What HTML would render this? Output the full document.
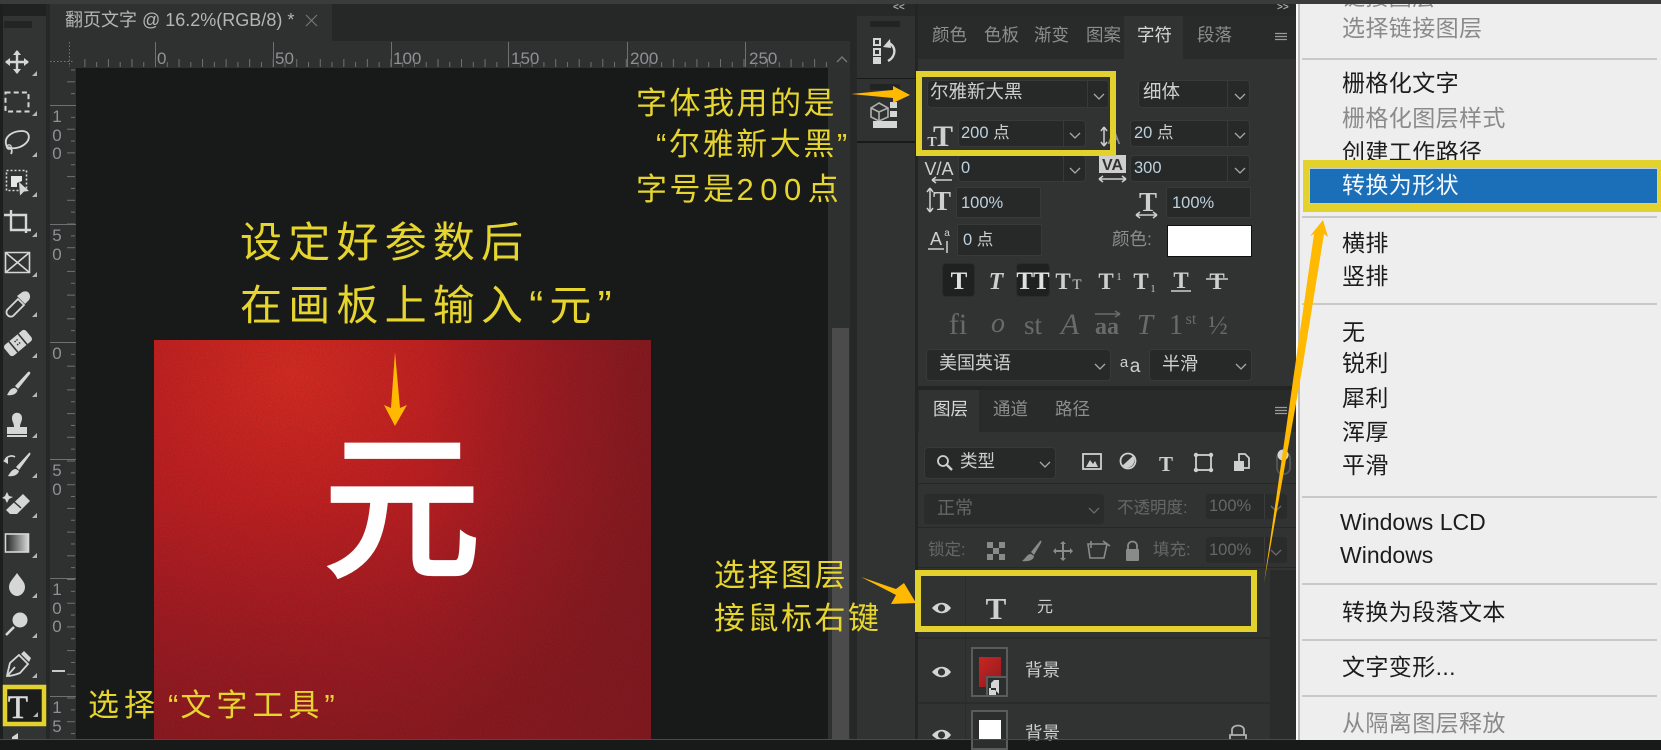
<!DOCTYPE html>
<html lang="zh"><head><meta charset="utf-8"><title>翻页文字</title>
<style>
*{box-sizing:border-box;margin:0;padding:0}
html,body{width:1661px;height:740px;overflow:hidden;background:#181a1a;font-family:"Liberation Sans","Noto Sans CJK SC",sans-serif}
.b{position:absolute}
.t{position:absolute;white-space:nowrap;line-height:1}
.y{position:absolute;white-space:nowrap;line-height:1;color:#e6d52f;font-family:"Liberation Sans","Noto Sans CJK SC",sans-serif;font-weight:400;z-index:5}
.f{position:absolute;background:#272929;border:1px solid #383a3a;border-radius:4px}
.p{color:#cfcfcf}.n{color:#bcd0de}.g{color:#8d8d8d}.d{color:#666}
.m{position:absolute;left:1342px;font-size:23px;line-height:1;white-space:nowrap;color:#1c1c1c;letter-spacing:.4px}
.md{color:#8a8a8a}
.s{position:absolute;left:1302px;width:355px;height:2px;background:#c9c9c9}
</style></head><body>

<!-- frame -->
<div class="b" style="left:0;top:0;width:1661px;height:4px;background:#3b3b3b"></div>
<div class="b" style="left:0;top:4px;width:3px;height:736px;background:#1d1e1e"></div>
<div class="b" style="left:3px;top:4px;width:43px;height:736px;background:#323433"></div>
<div class="b" style="left:3px;top:4px;width:43px;height:12px;background:#202121"></div>
<div class="b" style="left:46px;top:4px;width:4px;height:736px;background:#262727"></div>

<!-- document tabs -->
<div class="b" style="left:50px;top:4px;width:778px;height:37px;background:#262727"></div>
<div class="b" style="left:50px;top:4px;width:282px;height:37px;background:#2f3030"></div>
<div class="t" style="left:65px;top:11px;font-size:18px;color:#b5b5b5">翻页文字 @ 16.2%(RGB/8) *</div>

<!-- rulers -->
<div class="b" style="left:50px;top:41px;width:800px;height:27px;background:#2f3030"></div>
<div class="b" style="left:50px;top:41px;width:26px;height:699px;background:#2f3030"></div>
<div class="b" style="left:76px;top:68px;width:752px;height:672px;background:#181a1a"></div>
<div class="t g" style="left:157px;top:50px;font-size:17px;color:#8d9296">0</div>
<div class="t g" style="left:275px;top:50px;font-size:17px;color:#8d9296">50</div>
<div class="t g" style="left:393px;top:50px;font-size:17px;color:#8d9296">100</div>
<div class="t g" style="left:511px;top:50px;font-size:17px;color:#8d9296">150</div>
<div class="t g" style="left:630px;top:50px;font-size:17px;color:#8d9296">200</div>
<div class="t g" style="left:749px;top:50px;font-size:17px;color:#8d9296">250</div>
<div class="t" style="left:51px;top:108px;width:12px;font-size:17px;line-height:18.5px;white-space:normal;text-align:center;color:#8d9296">1<br>0<br>0</div>
<div class="t" style="left:51px;top:227px;width:12px;font-size:17px;line-height:18.5px;white-space:normal;text-align:center;color:#8d9296">5<br>0</div>
<div class="t" style="left:51px;top:345px;width:12px;font-size:17px;line-height:18.5px;white-space:normal;text-align:center;color:#8d9296">0</div>
<div class="t" style="left:51px;top:462px;width:12px;font-size:17px;line-height:18.5px;white-space:normal;text-align:center;color:#8d9296">5<br>0</div>
<div class="t" style="left:51px;top:581px;width:12px;font-size:17px;line-height:18.5px;white-space:normal;text-align:center;color:#8d9296">1<br>0<br>0</div>
<div class="t" style="left:51px;top:699px;width:12px;font-size:17px;line-height:18.5px;white-space:normal;text-align:center;color:#8d9296">1<br>5</div>

<!-- canvas -->
<div class="b" style="left:154px;top:340px;width:497px;height:400px;background:radial-gradient(ellipse 430px 380px at 28% 8%,#d42c22 0,#c02122 35%,#ab1d24 68%,rgba(150,27,34,.95) 100%),#8f1b22"></div>
<svg class="b" style="left:154px;top:340px" width="497" height="400"><defs>
<linearGradient id="rd" x1="0" x2="1" y1="0" y2="0"><stop offset=".55" stop-color="#7a1a20" stop-opacity="0"/><stop offset="1" stop-color="#7a1a20" stop-opacity=".7"/></linearGradient>
<linearGradient id="rb" x1="0" x2="0" y1="0" y2="1"><stop offset=".4" stop-color="#7f1a20" stop-opacity="0"/><stop offset="1" stop-color="#7f1a20" stop-opacity=".45"/></linearGradient>
<filter id="nz"><feTurbulence type="fractalNoise" baseFrequency=".8" numOctaves="2" seed="4"/><feColorMatrix values="0 0 0 0 0 0 0 0 0 0 0 0 0 0 0 0 0 0 .9 -.25"/></filter></defs>
<rect width="497" height="400" fill="url(#rd)"/><rect width="497" height="400" fill="url(#rb)"/>
<rect width="497" height="400" filter="url(#nz)" opacity=".22"/></svg>
<div class="t" style="left:324px;top:418px;font-size:156px;font-weight:400;color:#fff;-webkit-text-stroke:5px #fff;font-family:'Noto Sans CJK SC',sans-serif">元</div>

<!-- scrollbar & gap -->
<div class="b" style="left:828px;top:68px;width:22px;height:672px;background:#2e2f2f"></div>
<div class="b" style="left:832px;top:328px;width:17px;height:412px;background:#4b4b4b"></div>
<div class="b" style="left:850px;top:4px;width:7px;height:736px;background:#262727"></div>
<div class="b" style="left:828px;top:4px;width:29px;height:37px;background:#262727"></div>

<!-- dock -->
<div class="b" style="left:857px;top:4px;width:439px;height:12px;background:#272828"></div>
<div class="b" style="left:857px;top:16px;width:58px;height:62px;background:#303232"></div>
<div class="b" style="left:857px;top:79px;width:58px;height:62px;background:#303232"></div>
<div class="b" style="left:857px;top:143px;width:58px;height:597px;background:#313333"></div>
<div class="b" style="left:915px;top:4px;width:3px;height:736px;background:#232424"></div>

<!-- right panel -->
<div class="b" style="left:918px;top:16px;width:378px;height:43px;background:#292a2a"></div>
<div class="b" style="left:1124px;top:16px;width:59px;height:43px;background:#313333"></div>
<div class="b" style="left:918px;top:59px;width:378px;height:327px;background:#313333"></div>
<div class="b" style="left:918px;top:386px;width:378px;height:4px;background:#232424"></div>
<div class="b" style="left:918px;top:390px;width:378px;height:42px;background:#292a2a"></div>
<div class="b" style="left:919px;top:390px;width:60px;height:42px;background:#313333"></div>
<div class="b" style="left:918px;top:432px;width:378px;height:308px;background:#313333"></div>
<div class="b" style="left:1270px;top:570px;width:26px;height:170px;background:#2a2c2c"></div>
<div class="b" style="left:918px;top:483px;width:378px;height:1px;background:#262828"></div>
<div class="b" style="left:918px;top:527px;width:378px;height:1px;background:#262828"></div>
<div class="b" style="left:918px;top:567px;width:378px;height:1px;background:#262828"></div>
<div class="b" style="left:918px;top:637px;width:352px;height:2px;background:#2a2c2c"></div>
<div class="b" style="left:918px;top:702px;width:352px;height:2px;background:#2a2c2c"></div>
<div class="b" style="left:965px;top:576px;width:1px;height:164px;background:#2a2c2c"></div>

<!-- tabs -->
<div class="t g" style="left:932px;top:27px;font-size:17.5px">颜色</div>
<div class="t g" style="left:984px;top:27px;font-size:17.5px">色板</div>
<div class="t g" style="left:1034px;top:27px;font-size:17.5px">渐变</div>
<div class="t g" style="left:1086px;top:27px;font-size:17.5px">图案</div>
<div class="t" style="left:1137px;top:27px;font-size:17.5px;color:#d8d8d8">字符</div>
<div class="t g" style="left:1197px;top:27px;font-size:17.5px">段落</div>

<!-- character panel fields -->
<div class="f" style="left:927px;top:80px;width:182px;height:28px"></div>
<div class="f" style="left:1138px;top:80px;width:112px;height:28px"></div>
<div class="f" style="left:958px;top:120px;width:128px;height:27px"></div>
<div class="f" style="left:1130px;top:120px;width:120px;height:27px"></div>
<div class="f" style="left:958px;top:155px;width:128px;height:27px"></div>
<div class="f" style="left:1130px;top:155px;width:120px;height:27px"></div>
<div class="f" style="left:956px;top:187px;width:85px;height:31px;border-radius:1px"></div>
<div class="f" style="left:1166px;top:187px;width:85px;height:31px;border-radius:1px"></div>
<div class="f" style="left:957px;top:224px;width:85px;height:32px;border-radius:1px"></div>
<div class="b" style="left:1167px;top:225px;width:85px;height:32px;background:#fff;border:1px solid #111"></div>
<div class="f" style="left:942px;top:263px;width:33px;height:34px;background:#1f2121;border-color:#2b2d2d"></div>
<div class="f" style="left:1016px;top:263px;width:34px;height:34px;background:#1f2121;border-color:#2b2d2d"></div>
<div class="f" style="left:926px;top:349px;width:185px;height:32px"></div>
<div class="f" style="left:1149px;top:349px;width:103px;height:32px"></div>
<div class="b" style="left:1087px;top:81px;width:1px;height:26px;background:#383a3a"></div>
<div class="b" style="left:1227px;top:81px;width:1px;height:26px;background:#383a3a"></div>
<div class="b" style="left:1063px;top:121px;width:1px;height:25px;background:#383a3a"></div>
<div class="b" style="left:1227px;top:121px;width:1px;height:25px;background:#383a3a"></div>
<div class="b" style="left:1063px;top:156px;width:1px;height:25px;background:#383a3a"></div>
<div class="b" style="left:1227px;top:156px;width:1px;height:25px;background:#383a3a"></div>

<div class="t p" style="left:930px;top:83px;font-size:18.5px">尔雅新大黑</div>
<div class="t p" style="left:1143px;top:83px;font-size:18.5px">细体</div>
<div class="t n" style="left:961px;top:125px;font-size:16.5px">200 <span class="p">点</span></div>
<div class="t n" style="left:1134px;top:125px;font-size:16.5px">20 <span class="p">点</span></div>
<div class="t n" style="left:961px;top:160px;font-size:16.5px">0</div>
<div class="t n" style="left:1134px;top:160px;font-size:16.5px">300</div>
<div class="t n" style="left:961px;top:195px;font-size:16.5px">100%</div>
<div class="t n" style="left:1172px;top:195px;font-size:16.5px">100%</div>
<div class="t n" style="left:963px;top:232px;font-size:16.5px">0 <span class="p">点</span></div>
<div class="t g" style="left:1112px;top:231px;font-size:17.5px">颜色:</div>
<div class="t p" style="left:939px;top:354px;font-size:18px">美国英语</div>
<div class="t p" style="left:1162px;top:355px;font-size:18px">半滑</div>

<!-- layers panel -->
<div class="t" style="left:933px;top:401px;font-size:17.5px;color:#d8d8d8">图层</div>
<div class="t g" style="left:993px;top:401px;font-size:17.5px">通道</div>
<div class="t g" style="left:1055px;top:401px;font-size:17.5px">路径</div>
<div class="f" style="left:924px;top:447px;width:132px;height:32px"></div>
<div class="t p" style="left:960px;top:453px;font-size:17.5px">类型</div>
<div class="b" style="left:924px;top:494px;width:180px;height:30px;background:#2a2c2c;border-radius:3px"></div>
<div class="t d" style="left:937px;top:499px;font-size:18px">正常</div>
<div class="t d" style="left:1117px;top:500px;font-size:16.5px">不透明度:</div>
<div class="b" style="left:1206px;top:494px;width:81px;height:25px;background:#2a2c2c;border-radius:3px"></div>
<div class="t d" style="left:1209px;top:498px;font-size:16.5px">100%</div>
<div class="b" style="left:1264px;top:494px;width:1px;height:25px;background:#3a3c3c"></div>
<div class="t d" style="left:928px;top:542px;font-size:16.5px">锁定:</div>
<div class="t d" style="left:1153px;top:542px;font-size:16.5px">填充:</div>
<div class="b" style="left:1206px;top:537px;width:81px;height:26px;background:#2a2c2c;border-radius:3px"></div>
<div class="t d" style="left:1209px;top:542px;font-size:16.5px">100%</div>
<div class="b" style="left:1264px;top:537px;width:1px;height:26px;background:#3a3c3c"></div>
<div class="t p" style="left:1037px;top:600px;font-size:16px">元</div>

<!-- layer thumbs -->
<div class="b" style="left:971px;top:647px;width:37px;height:50px;border:2px solid #5a5c5c;background:#2c2e2e"></div>
<div class="b" style="left:979px;top:657px;width:22px;height:30px;background:linear-gradient(135deg,#c92620,#8f1a22)"></div>
<div class="b" style="left:986px;top:676px;width:22px;height:21px;background:#2c2e2e;border:2px solid #5a5c5c"></div>
<div class="t p" style="left:1025px;top:662px;font-size:17.5px">背景</div>
<div class="b" style="left:971px;top:710px;width:37px;height:40px;border:2px solid #5a5c5c;background:#2c2e2e"></div>
<div class="b" style="left:979px;top:720px;width:22px;height:20px;background:#fff"></div>
<div class="t p" style="left:1025px;top:725px;font-size:17.5px">背景</div>

<!-- context menu -->
<div class="b" style="left:1296px;top:4px;width:365px;height:736px;background:#eeeeee;border-left:2px solid #fafafa"></div>
<div class="b" style="left:1298px;top:4px;width:2px;height:736px;background:#bdbdbd"></div>
<div class="m md" style="top:-14px">链接图层</div>
<div class="b" style="left:1296px;top:0;width:365px;height:4px;background:#3b3b3b;z-index:3"></div>
<div class="m md" style="top:17px">选择链接图层</div>
<div class="s" style="top:58px"></div>
<div class="m" style="top:72px">栅格化文字</div>
<div class="m md" style="top:107px">栅格化图层样式</div>
<div class="m" style="top:141px">创建工作路径</div>
<div class="b" style="left:1303px;top:160px;width:358px;height:52px;background:#e3d22e"></div>
<div class="b" style="left:1309px;top:168px;width:349px;height:36px;background:#1a6fb8;border:1px solid #b8cfe6"></div>
<div class="m" style="top:174px;color:#f4f8fc">转换为形状</div>
<div class="s" style="top:216px"></div>
<div class="m" style="top:232px">横排</div>
<div class="m" style="top:265px">竖排</div>
<div class="s" style="top:303px"></div>
<div class="m" style="top:321px">无</div>
<div class="m" style="top:352px">锐利</div>
<div class="m" style="top:387px">犀利</div>
<div class="m" style="top:421px">浑厚</div>
<div class="m" style="top:454px">平滑</div>
<div class="s" style="top:496px"></div>
<div class="m" style="top:511px;left:1340px;letter-spacing:0">Windows LCD</div>
<div class="m" style="top:544px;left:1340px;letter-spacing:0">Windows</div>
<div class="s" style="top:583px"></div>
<div class="m" style="top:601px">转换为段落文本</div>
<div class="s" style="top:639px"></div>
<div class="m" style="top:656px">文字变形...</div>
<div class="s" style="top:695px"></div>
<div class="m md" style="top:712px">从隔离图层释放</div>

<!-- icon layer -->
<svg class="b" style="left:0;top:0;z-index:4" width="1661" height="740" viewBox="0 0 1661 740">
<defs>
<path id="cv" d="M-5-2L0 3L5-2" fill="none" stroke="#a8a8a8" stroke-width="1.3"/>
<path id="tri" d="M5 0V5H0Z" fill="#b5b5b5"/>
<pattern id="tk" x="155" y="41" width="23.54" height="26" patternUnits="userSpaceOnUse"><rect x="0" y="18" width="1" height="8" fill="#6f7171"/><rect x="11.77" y="21" width="1" height="5" fill="#6f7171"/></pattern>
<pattern id="vk" x="50" y="105" width="26" height="23.7" patternUnits="userSpaceOnUse"><rect x="17" y="0" width="8" height="1" fill="#6f7171"/><rect x="21" y="11.85" width="4" height="1" fill="#6f7171"/></pattern>
</defs>

<!-- ruler ticks -->
<rect x="76" y="41" width="752" height="26" fill="url(#tk)"/>
<g fill="#6f7171"><rect x="155" y="42" width="1" height="25"/><rect x="273" y="42" width="1" height="25"/><rect x="391" y="42" width="1" height="25"/><rect x="508" y="42" width="1" height="25"/><rect x="627" y="42" width="1" height="25"/><rect x="745" y="42" width="1" height="25"/>
<rect x="50" y="105" width="26" height="1"/><rect x="50" y="224" width="26" height="1"/><rect x="50" y="342" width="26" height="1"/><rect x="50" y="459" width="26" height="1"/><rect x="50" y="578" width="26" height="1"/><rect x="50" y="696" width="26" height="1"/></g>
<rect x="50" y="68" width="26" height="672" fill="url(#vk)"/>
<rect x="52" y="670" width="13" height="2" fill="#c9c9c9"/>
<path d="M69.5 42V67M50 61.5H74" stroke="#777" stroke-dasharray="1.5 2" fill="none"/>
<path d="M306 15L317 26M317 15L306 26" stroke="#777" stroke-width="1.2"/>
<path d="M837 62l5-5 5 5" stroke="#777" stroke-width="1.4" fill="none"/>
<text x="893" y="10" font-size="10" fill="#aaa" font-weight="700" font-family="Liberation Sans">&lt;&lt;</text>
<text x="1277" y="10" font-size="10" fill="#aaa" font-weight="700" font-family="Liberation Sans">&gt;&gt;</text>

<!-- toolbar -->
<rect x="4" y="21" width="28" height="7" fill="#1f2020" opacity=".75"/>
<g fill="#b5b5b5">
<use href="#tri" x="32" y="71"/><use href="#tri" x="32" y="111"/><use href="#tri" x="32" y="152"/><use href="#tri" x="32" y="192"/><use href="#tri" x="32" y="232"/><use href="#tri" x="32" y="272"/><use href="#tri" x="32" y="312"/><use href="#tri" x="32" y="353"/><use href="#tri" x="32" y="392"/><use href="#tri" x="32" y="433"/><use href="#tri" x="32" y="473"/><use href="#tri" x="32" y="513"/><use href="#tri" x="32" y="553"/><use href="#tri" x="32" y="593"/><use href="#tri" x="32" y="633"/><use href="#tri" x="32" y="673"/>
</g>
<g stroke="#d6d6d6" fill="none" stroke-width="2">
<!-- move -->
<path d="M6 62H28M17 51V73" stroke-width="2.4"/><path d="M17 50l-4 5h8zM17 74l-4-5h8zM5 62l5-4v8zM29 62l-5-4v8z" fill="#d6d6d6" stroke="none"/>
<!-- marquee -->
<rect x="5.5" y="92.5" width="23" height="19" stroke-dasharray="5 3.2"/>
<!-- lasso -->
<path d="M7 147C2 136 14 131 22 131C30 131 31 139 25 144C19 149 11 149 7 147ZM8 147c3 1 5 3 3 7" stroke-width="1.8"/><circle cx="9" cy="147" r="2.2" stroke-width="1.4"/>
<!-- object select -->
<rect x="6.5" y="170.5" width="20" height="20" stroke-dasharray="2 2" stroke-width="1.6"/>
<path d="M11 176h11v5l-5 2v4h-6z" fill="#e6e6e6" stroke="none"/><path d="M19 182l10 9-5 .5-4 4z" fill="#d6d6d6" stroke="none"/>
<!-- crop -->
<path d="M4 215H26V233M11 210V230H31" stroke-width="2.4"/>
<!-- frame -->
<path d="M5.5 252.5H29.5V272.5H5.5ZM5.5 252.5L29.5 272.5M29.5 252.5L5.5 272.5" stroke-width="1.6"/>
<!-- eyedropper -->
<path d="M7 310L18 299L24 305L13 316C10 318 5 315 7 310Z" stroke-width="1.8"/><path d="M17 296L25 304L29 300C31 297 30 294 28 292C26 291 23 291 21 293Z" fill="#d6d6d6" stroke="none"/>
<!-- healing -->
<g transform="rotate(-40 18 343)"><rect x="4" y="336" width="28" height="14" rx="3" fill="#d6d6d6" stroke="none"/><path d="M12 336V350M24 336V350" stroke="#323433" stroke-width="1.6"/><path d="M16 340h4M16 344h4" stroke="#323433" stroke-width="1.4" stroke-dasharray="1.5 1"/></g>
<!-- brush -->
<path d="M28 372L15 386L18 389L30 374C31 372 29 371 28 372Z" fill="#d6d6d6" stroke="none"/><path d="M15 388C10 388 9 392 7 395C12 396 17 394 17.500 390Z" fill="#d6d6d6" stroke="none"/>
<!-- stamp -->
<path d="M12 418C12 411 22 411 22 418C22 422 20 423 20 427H14C14 423 12 422 12 418ZM7 427H27V434H7Z" fill="#d6d6d6" stroke="none"/><rect x="7" y="435" width="20" height="2" fill="#d6d6d6" stroke="none"/>
<!-- history brush -->
<path d="M29 453L16 467L19 470L30 455C31 453 30 452 29 453Z" fill="#d6d6d6" stroke="none"/><path d="M16 469C12 469 10 473 8 476C13 477 18 475 19 471Z" fill="#d6d6d6" stroke="none"/><path d="M5 460C7 456 12 455 15 457" stroke-width="1.6"/><path d="M3 461l5 3 0-6z" fill="#d6d6d6" stroke="none"/>
<!-- eraser -->
<path d="M23 494L30 501L17 514H10L6 510Z" fill="#d6d6d6" stroke="none"/><path d="M12 500l9 8" stroke="#323433" stroke-width="1.5"/><path d="M5 496l2-4 2 4 4 1-4 2-2 4-2-4-3-1z" fill="#d6d6d6" stroke="none"/>
<!-- gradient -->
<defs><linearGradient id="gr"><stop offset="0" stop-color="#222"/><stop offset="1" stop-color="#d8d8d8"/></linearGradient></defs>
<rect x="5.500" y="534" width="23" height="18" fill="url(#gr)" stroke="#d6d6d6" stroke-width="1.6"/>
<!-- drop -->
<path d="M17 573C21 579 25 582 25 587C25 592 21 596 17 596C13 596 9 592 9 587C9 582 13 579 17 573Z" fill="#d6d6d6" stroke="none"/>
<!-- dodge -->
<circle cx="20" cy="620" r="7.500" fill="#d6d6d6" stroke="none"/><path d="M14 627L6 635" stroke-width="2.6"/>
<!-- pen -->
<path d="M19 655L28 664L20 673C15 675 10 676 7 676C8 671 9 667 10 663ZM8 675L15 667" stroke-width="1.8"/><path d="M21 654L24 651L31 658L29 662Z" fill="#d6d6d6" stroke="none"/>
<!-- tool selection box -->
<rect x="5" y="687" width="39" height="37" fill="#1b1d1d" stroke="#e3d22e" stroke-width="4.500"/>
<path d="M12 737L18 733V740H12Z" fill="#d6d6d6" stroke="none"/>
</g>
<use href="#tri" x="33" y="712"/>
<text x="18" y="718" font-family="Liberation Serif" font-size="33" fill="#dadada" stroke="#dadada" stroke-width=".5" text-anchor="middle">T</text>

<!-- dock icons -->
<rect x="870" y="21" width="30" height="6" fill="#1f2020" opacity=".8"/>
<rect x="870" y="84" width="30" height="6" fill="#1f2020" opacity=".8"/>
<g stroke="#d6d6d6" fill="none" stroke-width="2">
<rect x="874" y="39" width="6" height="6"/><rect x="874" y="49" width="6" height="6"/><rect x="873" y="57" width="8" height="7" fill="#d6d6d6" stroke="none"/>
<path d="M888 43C896 45 897 56 888 61" stroke-width="2.4"/><path d="M883 47L890 39L891 48Z" fill="#d6d6d6" stroke="none"/>
<path d="M879 103L888 108V117L879 121L871 117V108ZM871 108L879 112L888 108M879 112V121" stroke="#b0b0b0" stroke-width="1.6"/>
<rect x="890" y="102" width="7" height="6" fill="#d6d6d6" stroke="none"/><rect x="890" y="111" width="7" height="6" fill="#d6d6d6" stroke="none"/><rect x="873" y="121" width="24" height="7" fill="#d6d6d6" stroke="none"/>
</g>

<!-- hamburgers -->
<path d="M1275 33.500H1287M1275 36.500H1287M1275 39.500H1287M1275 407.500H1287M1275 410.500H1287M1275 413.500H1287" stroke="#9a9a9a" stroke-width="1.300"/>

<!-- chevrons -->
<use href="#cv" x="1099" y="96"/><use href="#cv" x="1240" y="96"/><use href="#cv" x="1075" y="135"/><use href="#cv" x="1240" y="135"/><use href="#cv" x="1075" y="170"/><use href="#cv" x="1240" y="170"/><use href="#cv" x="1100" y="366"/><use href="#cv" x="1241" y="366"/><use href="#cv" x="1045" y="464"/>
<g opacity=".5"><use href="#cv" x="1094" y="510"/><use href="#cv" x="1276" y="508"/><use href="#cv" x="1276" y="552"/></g>

<!-- char icons -->
<g font-family="Liberation Serif" fill="#cfcfcf" text-anchor="middle">
<text x="943" y="146" font-size="30" font-weight="700">T</text><text x="932" y="146" font-size="14" font-weight="700">T</text>
<text x="1114" y="144" font-size="19" fill="#8d8d8d" font-family="Liberation Sans">A</text>
<text x="939" y="175" font-size="18" font-family="Liberation Sans">V/A</text>
<text x="942" y="210" font-size="27" font-weight="700">T</text>
<text x="1148" y="211" font-size="27" font-weight="700">T</text>
<text x="936" y="245" font-size="18" font-family="Liberation Sans">A</text><text x="947" y="236" font-size="10" font-family="Liberation Sans">a</text>
<text x="959" y="289" font-size="25" font-weight="700" fill="#e0e0e0">T</text>
<text x="996" y="289" font-size="24" font-style="italic" font-weight="700">T</text>
<text x="1033" y="289" font-size="25" font-weight="700" fill="#e0e0e0">TT</text>
<text x="1063" y="289" font-size="23" font-weight="700">T</text><text x="1077" y="289" font-size="15">T</text>
<text x="1106" y="289" font-size="23" font-weight="700">T</text><text x="1119" y="280" font-size="10">1</text>
<text x="1141" y="289" font-size="23" font-weight="700">T</text><text x="1153" y="292" font-size="10">1</text>
<text x="1181" y="288" font-size="23" font-weight="700">T</text>
<text x="1217" y="289" font-size="23" font-weight="700">T</text>
<g fill="#6a6a6a">
<text x="958" y="334" font-size="30">fi</text><text x="998" y="332" font-size="28" font-style="italic">o</text><text x="1033" y="334" font-size="27">st</text><text x="1070" y="334" font-size="30" font-style="italic">A</text><text x="1107" y="334" font-size="24" font-weight="700">aa</text><text x="1145" y="334" font-size="29" font-style="italic">T</text><text x="1176" y="334" font-size="28">1</text><text x="1191" y="324" font-size="16">st</text><text x="1218" y="334" font-size="26">½</text>
</g>
<text x="1124" y="367" font-size="15" font-family="Liberation Sans">a</text><text x="1135" y="372" font-size="19" font-family="Liberation Sans">a</text>
<text x="1166" y="471" font-size="21" font-weight="700">T</text>
<text x="996" y="619" font-size="31" font-weight="700" fill="#d0d0d0">T</text>
</g>
<path d="M1095 314H1120M1120 314l-5-3M1120 314l-5 3" stroke="#6a6a6a" stroke-width="1.500" fill="none"/>
<g stroke="#cfcfcf" fill="none" stroke-width="1.500">
<path d="M932 180H952M932 180l4-3M932 180l4 3"/>
<rect x="1099" y="155" width="27" height="18" fill="#cfcfcf" stroke="none"/>
<text x="1112.500" y="170" font-size="16" font-weight="700" font-family="Liberation Sans" fill="#333" stroke="none" text-anchor="middle">VA</text>
<path d="M1099 179H1126M1099 179l4-3M1099 179l4 3M1126 179l-4-3M1126 179l-4 3"/>
<path d="M930 188V212M930 188l-3 4M930 188l3 4M930 212l-3-4M930 212l3-4"/>
<path d="M1136 215H1157M1136 215l4-3M1136 215l4 3M1157 215l-4-3M1157 215l-4 3"/>
<path d="M1104 127V146M1104 127l-3 4M1104 127l3 4M1104 146l-3-4M1104 146l3-4"/>
<path d="M928 249H944M947 253V241"/>
<path d="M1171 291H1191M1206 279H1228"/>
</g>

<!-- filter icons -->
<g stroke="#cfcfcf" fill="none" stroke-width="1.800">
<circle cx="943" cy="461" r="5"/><path d="M947 465L952 470" stroke-width="2.400"/>
<rect x="1083" y="454" width="18" height="15"/><path d="M1086 467L1090 460L1093 464L1095 461L1098 467Z" fill="#cfcfcf" stroke="none"/>
<circle cx="1128" cy="461" r="7.500"/><path d="M1122 466A7.500 7.500 0 0 0 1133 456Z" fill="#cfcfcf" stroke="none"/>
<rect x="1196" y="455" width="15" height="15"/><g fill="#cfcfcf" stroke="none"><circle cx="1196" cy="455" r="2.200"/><circle cx="1211" cy="455" r="2.200"/><circle cx="1196" cy="470" r="2.200"/><circle cx="1211" cy="470" r="2.200"/></g>
<path d="M1239 461V454H1245L1249 458V468H1244"/><rect x="1234" y="461" width="10" height="10" fill="#cfcfcf" stroke="none"/>
<rect x="1277" y="452" width="13" height="22" rx="6" stroke="#555"/><circle cx="1283" cy="455" r="5.500" fill="#d6d6d6" stroke="none"/>
</g>

<!-- lock row icons -->
<g fill="#8a8a8a" stroke="none">
<path d="M987 542h18v18h-18z"/><g fill="#313333"><rect x="993" y="542" width="6" height="6"/><rect x="987" y="548" width="6" height="6"/><rect x="999" y="548" width="6" height="6"/><rect x="993" y="554" width="6" height="6"/></g>
<path d="M1040 541L1031 552L1034 555L1041 543C1042 541 1041 540 1040 541ZM1031 554C1027 554 1026 558 1022 561C1028 562 1034 560 1034 556Z"/>
<path d="M1063 541l-3 3h6zM1063 561l-3-3h6zM1053 551l3-3v6zM1073 551l-3-3v6z"/>
<rect x="1126" y="549" width="13" height="12" rx="1"/>
</g>
<g stroke="#8a8a8a" fill="none">
<path d="M1055 551H1071M1063 543V559" stroke-width="2"/>
<path d="M1088 544H1107L1104 558H1090ZM1091 541V548M1103 541L1110 546" stroke-width="1.600"/>
<path d="M1128 549V546C1128 540 1137 540 1137 546V549" stroke-width="1.800"/>
</g>

<!-- eyes -->
<g>
<path d="M932 608C938 601 946 601 951 608C946 615 938 615 932 608Z" fill="#d4d4d4"/><circle cx="941.500" cy="608" r="3.600" fill="#333"/>
<path d="M932 672C938 665 946 665 951 672C946 679 938 679 932 672Z" fill="#d4d4d4"/><circle cx="941.500" cy="672" r="3.600" fill="#333"/>
<path d="M932 735C938 728 946 728 951 735C946 742 938 742 932 735Z" fill="#d4d4d4"/><circle cx="941.500" cy="735" r="3.600" fill="#333"/>
</g>
<path d="M991 683V690H995L999 694V680H994ZM989 688H996V695H989Z" fill="#d4d4d4"/>
<path d="M1232 735V730C1232 724 1244 724 1244 730V735M1230 735H1246V740H1230Z" fill="none" stroke="#b0b0b0" stroke-width="1.800"/>

<!-- annotation boxes -->
<rect x="919" y="74" width="194" height="79" fill="none" stroke="#e3d22e" stroke-width="6"/>
<rect x="918" y="573" width="336" height="56" fill="none" stroke="#e3d22e" stroke-width="6"/>

<!-- arrows -->
<g fill="#ffb900">
<path d="M395 352L400 408L407 405L395 426L384 405L391 408Z"/>
<path d="M851 94L893 90L893 86L910 95L893 103L893 98Z"/>
<path d="M861 577L896 589L904 583L916 603L891 604L896 595Z"/>
<path d="M1264 583L1314 234L1310 236L1323 220L1328 237L1324 234L1302 370Z"/>
</g>
</svg>

<!-- yellow annotation text -->
<div class="y" style="left:240px;top:222px;font-size:42px;letter-spacing:6.200px">设定好参数后</div>
<div class="y" style="left:240px;top:285px;font-size:42px;letter-spacing:6.200px">在画板上输入“元”</div>
<div class="y" style="left:636px;top:88px;font-size:31px;letter-spacing:2.500px">字体我用的是</div>
<div class="y" style="left:656px;top:129px;font-size:31px;letter-spacing:2.600px">“尔雅新大黑”</div>
<div class="y" style="left:636px;top:174px;font-size:31px;letter-spacing:2.500px">字号是<span style="letter-spacing:6.500px">200</span>点</div>
<div class="y" style="left:88px;top:690px;font-size:31px;letter-spacing:5px">选择<span style="margin-left:8px;margin-right:-3px">“</span>文字工具”</div>
<div class="y" style="left:714px;top:560px;font-size:31px;letter-spacing:2.500px">选择图层</div>
<div class="y" style="left:714px;top:603px;font-size:31px;letter-spacing:2.500px">接鼠标右键</div>

<div class="b" style="left:0;top:739px;width:1296px;height:1px;background:#4a4a4a;z-index:6"></div>
</body></html>
